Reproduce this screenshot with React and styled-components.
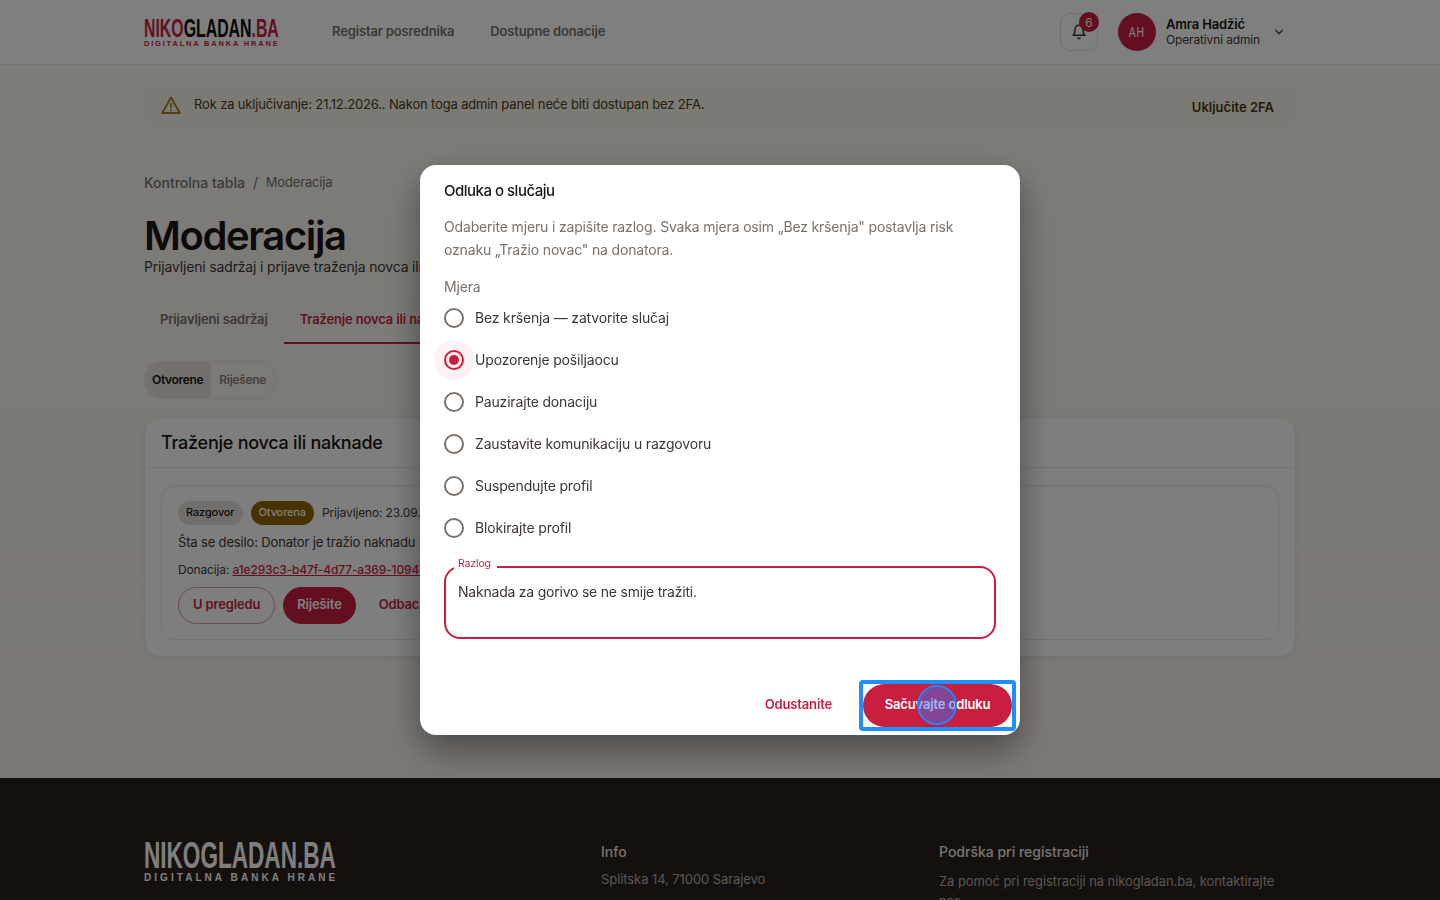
import React from 'react';
import styled, { createGlobalStyle } from 'styled-components';

const Global = createGlobalStyle`
  * { box-sizing: border-box; letter-spacing: -0.012em; }
  html, body { margin: 0; padding: 0; height: 900px; overflow: hidden; }
  body { font-family: "Inter", "Liberation Sans", sans-serif; color: #1c1512; background: #f9f6ef; }
`;
const Page = styled.div`height: 900px; overflow: hidden; display: flex; flex-direction: column; background: linear-gradient(180deg, #faf9f1 0%, #f8f5ef 50%, #f6eeea 100%);`;
const Container = styled.div`width: 1152px; margin: 0 auto;`;
const Header = styled.header`height: 65px; flex: none; background: #fff; border-bottom: 1px solid #ece5d9;`;
const HeaderRow = styled(Container)`height: 64px; display: flex; align-items: center;`;
const Logo = styled.div`display: flex; flex-direction: column; width: ${p => p.$w}px; flex: none; color: ${p => p.$plain ? '#fff' : '#c91f3f'};`;
const LogoMain = styled.div`font-family: "Liberation Sans", sans-serif; font-weight: 700; font-size: ${p => p.$size}px; line-height: ${p => p.$lh}px; letter-spacing: 0; white-space: nowrap; transform: scaleX(${p => p.$sx}); transform-origin: left center;`;
const LogoDark = styled.span`color: #0c0a09; letter-spacing: 0;`;
const LogoSub = styled.div`font-family: "Liberation Sans", sans-serif; font-weight: 700; font-size: ${p => p.$size}px; line-height: ${p => p.$lh}px; letter-spacing: ${p => p.$ls}px; white-space: nowrap;`;
const Nav = styled.nav`display: flex; gap: 36px; margin: -2px 0 0 53px; flex: 1;`;
const NavItem = styled.a`font-size: 13px; font-weight: 600; color: #7b716b;`;
const BellBox = styled.div`position: relative; width: 38px; height: 38px; border: 1px solid #e8e0d8; border-radius: 10px; display: flex; align-items: center; justify-content: center; color: #3a322e;`;
const Badge = styled.span`position: absolute; top: -2px; right: -2px; width: 20px; height: 20px; border-radius: 50%; background: #c91f3f; color: #fff; font-size: 12px; display: flex; align-items: center; justify-content: center;`;
const Avatar = styled.div`width: 38px; height: 38px; margin-left: 20px; border-radius: 50%; background: #c91f3f; color: #fff; display: flex; align-items: center; justify-content: center;`;
const AvatarText = styled.span`font-family: "Liberation Sans", sans-serif; font-size: 14px; letter-spacing: 1px; transform: scaleX(.75);`;
const UserInfo = styled.div`margin-left: 10px; padding-bottom: 2px; display: flex; flex-direction: column; width: 97px;`;
const UserName = styled.div`font-size: 13px; line-height: 16px; font-weight: 600; color: #1c1512;`;
const UserRole = styled.div`font-size: 12px; line-height: 14px; color: #3e3633; margin-top: 1px;`;
const Chevron = styled.div`margin-left: 9px; margin-right: 10px; display: flex; color: #4a4240;`;
const Main = styled.main`flex: none; height: 713px;`;
const Alert = styled(Container)`margin-top: 17px; height: 48px; border-radius: 16px; background: #f6f4e9; display: flex; align-items: flex-start; padding: 12px 22px 0 17px;`;
const AlertText = styled.div`margin-left: 13px; font-size: 13px; line-height: 20px; color: #4f3a16; flex: 1;`;
const AlertAction = styled.div`font-size: 13px; line-height: 20px; font-weight: 600; color: #4a3512; padding-top: 3px; letter-spacing: 0;`;
const Crumbs = styled(Container)`margin-top: 42px; display: flex; align-items: center; height: 20px;`;
const Crumb = styled.span`font-size: 14px; font-weight: 500; color: #7b716b; letter-spacing: 0;`;
const CrumbSep = styled.span`margin: 0 8px; font-size: 14px; color: #7b716b;`;
const CrumbNow = styled.span`font-size: 13px; color: #7b716b;`;
const Title = styled.h1`margin: 21px 0 0; font-size: 40px; line-height: 46px; font-weight: 600; letter-spacing: -1.4px; color: #1c1512;`;
const Sub = styled.p`margin: -2px 0 0; font-size: 14px; line-height: 20px; color: #3e3633; white-space: nowrap;`;
const Tabs = styled(Container)`margin-top: 18px; height: 49px; display: flex;`;
const Tab = styled.div`padding: 0 16px; font-size: 13px; font-weight: 600; line-height: 49px; height: 49px; color: ${p => p.$on ? '#c91f3f' : '#7b716b'}; border-bottom: 2px solid ${p => p.$on ? '#c91f3f' : 'transparent'}; white-space: nowrap;`;
const Seg = styled.div`margin-top: 17px; width: 132px; height: 38px; border: 1px solid #ece6dd; border-radius: 19px; display: flex; overflow: hidden;`;
const SegItem = styled.div`padding: 0 8px 0 ${p => p.$on ? 7 : 8}px; font-size: 12px; font-weight: 600; letter-spacing: -0.32px; line-height: 36px; color: ${p => p.$on ? '#1c1512' : '#8a807a'}; background: ${p => p.$on ? '#e7e1dc' : 'transparent'};`;
const Card = styled.section`margin-top: 18px; height: 240px; background: #fdfdfc; border: 1px solid #ece6dd; border-radius: 16px; box-shadow: 0 2px 10px rgba(70,40,30,.06);`;
const CardHead = styled.div`height: 50px; padding: 0 16px; display: flex; align-items: center; border-bottom: 1px solid #ece6dd;`;
const CardTitle = styled.h2`margin: 0; font-size: 18px; font-weight: 500; letter-spacing: -0.25px; color: #1c1512;`;
const Inner = styled.div`margin: 17px 16px 0; height: 155px; border: 1px solid #ece6dd; border-radius: 14px; padding: 15px 16px;`;
const ChipRow = styled.div`display: flex; align-items: center; height: 24px;`;
const Chip = styled.span`height: 24px; padding: 0 8px; border-radius: 12px; font-size: 11px; font-weight: 500; line-height: 23px; margin-right: 8px; color: ${p => p.$c}; background: ${p => p.$b};`;
const Meta = styled.span`font-size: 12px; color: #3e3633; white-space: nowrap; margin-top: -1px;`;
const Line = styled.div`font-size: 13px; line-height: 20px; margin-top: 7px; color: #3e3633; white-space: nowrap;`;
const Line2 = styled.div`font-size: 12px; line-height: 18px; margin-top: 9px; color: #3e3633; white-space: nowrap;`;
const Uuid = styled.a`color: #c91f3f; font-weight: 500; text-decoration: underline;`;
const Btns = styled.div`display: flex; align-items: center; margin-top: 8px; gap: 8px;`;
const Btn = styled.div`height: 37px; border-radius: 19px; padding: 0 ${p => p.$fill ? 13 : 14}px; font-size: 13px; font-weight: 600; line-height: 33px; white-space: nowrap; color: ${p => p.$fill ? '#fff' : '#c91f3f'}; background: ${p => p.$fill ? '#c91f3f' : 'transparent'}; border: 1px solid ${p => p.$ghost ? 'transparent' : '#c91f3f'}; ${p => p.$outline ? 'border-color: #e28fa0;' : ''}`;
const Footer = styled.footer`height: 122px; flex: none; background: #2a211d; overflow: hidden;`;
const FooterGrid = styled(Container)`display: grid; grid-template-columns: 457px 338px 1fr; padding-top: 62px;`;
const FootCol = styled.div``;
const FootTitle = styled.div`font-size: 14px; line-height: 24px; font-weight: 500; color: #eee7e0; letter-spacing: 0;`;
const FootText = styled.div`font-size: 13px; line-height: 20px; margin-top: ${p => p.$mt}px; color: #b5aca5; width: 345px; letter-spacing: -0.08px;`;

const Overlay = styled.div`position: fixed; inset: 0; background: rgba(0,0,0,.5); display: flex; align-items: center; justify-content: center;`;
const Modal = styled.div`position: relative; width: 600px; height: 570px; background: #fff; border-radius: 16px; box-shadow: 0 11px 30px rgba(0,0,0,.2), 0 24px 38px rgba(0,0,0,.14), 0 9px 46px rgba(0,0,0,.12); display: flex; flex-direction: column; padding: 16px 24px 0;`;
const MTitle = styled.h2`margin: 0; font-size: 15px; line-height: 20px; font-weight: 500; letter-spacing: -0.5px; color: #1c1512;`;
const MDesc = styled.p`margin: 14px 0 0; font-size: 14px; line-height: 23px; color: #7b716b; width: 540px;`;
const MLabel = styled.div`margin-top: 16px; font-size: 14px; line-height: 20px; color: #7b716b;`;
const Radios = styled.div`display: flex; flex-direction: column; margin-top: -1px;`;
const RadioRow = styled.label`height: 42px; display: flex; align-items: center; gap: 11px; font-size: 14px; color: #3e3633;`;
const RadioDot = styled.span`position: relative; width: 20px; height: 20px; margin-top: 2px; flex: none; border-radius: 50%; border: 2px solid ${p => p.$on ? '#c91f3f' : '#7b716b'}; display: flex; align-items: center; justify-content: center; &::before { content: ""; display: ${p => p.$on ? 'block' : 'none'}; position: absolute; left: -12px; top: -12px; width: 40px; height: 40px; border-radius: 50%; background: rgba(201,31,63,.06); } &::after { content: ""; display: ${p => p.$on ? 'block' : 'none'}; width: 10px; height: 10px; border-radius: 50%; background: #c91f3f; }`;
const Field = styled.fieldset`margin: 10px 0 0; padding: 0 12px; height: 81px; border: 2px solid #c91f3f; border-radius: 16px; min-width: 0;`;
const Legend = styled.legend`padding: 0 6px 6px 4px; margin-left: -4px; font-size: 10.5px; line-height: 12px; color: #c91f3f;`;
const FieldText = styled.div`font-size: 14px; line-height: 20px; color: #3e3633; margin-top: 6px; letter-spacing: -0.22px;`;
const MActions = styled.div`position: absolute; right: 8px; bottom: 8px; display: flex; align-items: center; gap: 31px;`;
const Cancel = styled.div`font-size: 13px; font-weight: 600; color: #c91f3f; padding-bottom: 3px;`;
const Save = styled.div`position: relative; width: 149px; height: 43px; border-radius: 22px; background: #c91f3f; color: #fff; font-size: 13px; font-weight: 600; text-align: center; line-height: 41px;`;
const Focus = styled.div`position: absolute; left: -4px; top: -4px; width: 157px; height: 51px; border: 4px solid #1e8fff; border-radius: 4px;`;
const Click = styled.div`position: absolute; left: 54px; top: 1px; width: 40px; height: 40px; border: 2px solid #2b82f0; border-radius: 50%; background: rgba(60,110,240,.5);`;

const radios = ['Bez kršenja — zatvorite slučaj', 'Upozorenje pošiljaocu', 'Pauzirajte donaciju', 'Zaustavite komunikaciju u razgovoru', 'Suspendujte profil', 'Blokirajte profil'];

export default function App() {
  return (
    <Page>
      <Global />
      <Header>
        <HeaderRow>
          <Logo $w={135}>
            <LogoMain $size={26} $lh={23} $sx={0.61}>NIKO<LogoDark>GLADAN</LogoDark>.BA</LogoMain>
            <LogoSub $size={7.5} $lh={8} $ls={1.8}>DIGITALNA BANKA HRANE</LogoSub>
          </Logo>
          <Nav>
            <NavItem>Registar posrednika</NavItem>
            <NavItem>Dostupne donacije</NavItem>
          </Nav>
          <BellBox>
            <svg width="16" height="18" viewBox="0 0 24 24" fill="none" stroke="currentColor" strokeWidth="2.2" strokeLinecap="round" strokeLinejoin="round"><path d="M6 8a6 6 0 0 1 12 0c0 7 3 9 3 9H3s3-2 3-9" /><path d="M10.3 21a1.9 1.9 0 0 0 3.4 0" /></svg>
            <Badge>6</Badge>
          </BellBox>
          <Avatar><AvatarText>AH</AvatarText></Avatar>
          <UserInfo>
            <UserName>Amra Hadžić</UserName>
            <UserRole>Operativni admin</UserRole>
          </UserInfo>
          <Chevron>
            <svg width="14" height="14" viewBox="0 0 24 24" fill="none" stroke="currentColor" strokeWidth="2.4" strokeLinecap="round" strokeLinejoin="round"><path d="m6 9 6 6 6-6" /></svg>
          </Chevron>
        </HeaderRow>
      </Header>
      <Main>
        <Alert>
          <svg width="20" height="18" viewBox="0 0 20 18" fill="none" style={{ marginTop: 2 }}><path d="M10 1.5 1.2 17h17.6L10 1.5Z" stroke="#a67c1e" strokeWidth="1.8" strokeLinejoin="round" /><path d="M10 7v5" stroke="#a67c1e" strokeWidth="1.8" /><circle cx="10" cy="14.3" r="1" fill="#a67c1e" /></svg>
          <AlertText>Rok za uključivanje: 21.12.2026.. Nakon toga admin panel neće biti dostupan bez 2FA.</AlertText>
          <AlertAction>Uključite 2FA</AlertAction>
        </Alert>
        <Crumbs>
          <Crumb>Kontrolna tabla</Crumb>
          <CrumbSep>/</CrumbSep>
          <CrumbNow>Moderacija</CrumbNow>
        </Crumbs>
        <Container>
          <Title>Moderacija</Title>
          <Sub>Prijavljeni sadržaj i prijave traženja novca ili naknade</Sub>
        </Container>
        <Tabs>
          <Tab>Prijavljeni sadržaj</Tab>
          <Tab $on>Traženje novca ili naknade</Tab>
        </Tabs>
        <Container>
          <Seg>
            <SegItem $on>Otvorene</SegItem>
            <SegItem>Riješene</SegItem>
          </Seg>
          <Card>
            <CardHead><CardTitle>Traženje novca ili naknade</CardTitle></CardHead>
            <Inner>
              <ChipRow>
                <Chip $c="#1c1512" $b="#e2dedb">Razgovor</Chip>
                <Chip $c="#fff" $b="#8f6400">Otvorena</Chip>
                <Meta>Prijavljeno: 23.09.2026.</Meta>
              </ChipRow>
              <Line>Šta se desilo: Donator je tražio naknadu za gorivo.</Line>
              <Line2>Donacija: <Uuid>a1e293c3-b47f-4d77-a369-1094c2d8e5f0</Uuid></Line2>
              <Btns>
                <Btn $outline>U pregledu</Btn>
                <Btn $fill>Riješite</Btn>
                <Btn $ghost>Odbacite</Btn>
              </Btns>
            </Inner>
          </Card>
        </Container>
      </Main>
      <Footer>
        <FooterGrid>
          <FootCol>
            <Logo $w={193} $plain>
              <LogoMain $size={37} $lh={32} $sx={0.61}>NIKOGLADAN.BA</LogoMain>
              <LogoSub $size={10} $lh={11} $ls={3.05}>DIGITALNA BANKA HRANE</LogoSub>
            </Logo>
          </FootCol>
          <FootCol>
            <FootTitle>Info</FootTitle>
            <FootText $mt={5}>Splitska 14, 71000 Sarajevo</FootText>
          </FootCol>
          <FootCol>
            <FootTitle>Podrška pri registraciji</FootTitle>
            <FootText $mt={7}>Za pomoć pri registraciji na nikogladan.ba, kontaktirajte nas.</FootText>
          </FootCol>
        </FooterGrid>
      </Footer>
      <Overlay>
        <Modal>
          <MTitle>Odluka o slučaju</MTitle>
          <MDesc>Odaberite mjeru i zapišite razlog. Svaka mjera osim „Bez kršenja" postavlja risk oznaku „Tražio novac" na donatora.</MDesc>
          <MLabel>Mjera</MLabel>
          <Radios>
            {radios.map((r, i) => (
              <RadioRow key={r}><RadioDot $on={i === 1} />{r}</RadioRow>
            ))}
          </Radios>
          <Field>
            <Legend>Razlog</Legend>
            <FieldText>Naknada za gorivo se ne smije tražiti.</FieldText>
          </Field>
          <MActions>
            <Cancel>Odustanite</Cancel>
            <Save>
              Sačuvajte odluku
              <Focus />
              <Click />
            </Save>
          </MActions>
        </Modal>
      </Overlay>
    </Page>
  );
}
